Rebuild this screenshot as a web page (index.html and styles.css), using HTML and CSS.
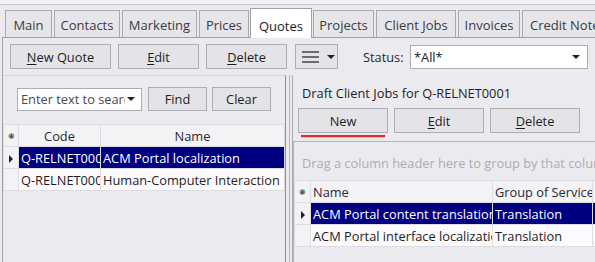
FILE: index.html
```html
<!DOCTYPE html>
<html lang="en">

<head>
    <meta charset="utf-8">
    <title>Quotes</title>
    <link rel="stylesheet" href="styles.css">
</head>

<body>
    <div class="topbar"></div>

    <nav class="tabs">
        <div class="tab t-main">Main</div>
        <div class="tab t-contacts">Contacts</div>
        <div class="tab t-marketing">Marketing</div>
        <div class="tab t-prices">Prices</div>
        <div class="tab t-quotes aktiv">Quotes</div>
        <div class="tab t-projects">Projects</div>
        <div class="tab t-jobs">Client Jobs</div>
        <div class="tab t-invoices">Invoices</div>
        <div class="tab t-credit">Credit Notes</div>
    </nav>

    <section class="page">
        <div class="toolbar">
            <button class="btn btn-quote"><u>N</u>ew Quote</button>
            <button class="btn btn-small"><u>E</u>dit</button>
            <button class="btn btn-small"><u>D</u>elete</button>
            <button class="btn btn-menu">
                <svg width="22" height="12" viewBox="0 0 22 12">
                    <rect x="0" y="0" width="17" height="2" fill="#6b6b70"/>
                    <rect x="0" y="5" width="17" height="2" fill="#6b6b70"/>
                    <rect x="0" y="10" width="17" height="2" fill="#6b6b70"/>
                </svg>
                <span class="caret"></span>
            </button>
            <span class="status-label">Status:</span>
            <div class="combo status-combo">*All*<span class="caret"></span></div>
        </div>

        <div class="split">
            <div class="pane venstre">
                <div class="search">
                    <div class="combo search-combo"><span class="clip">Enter text to search</span><span class="caret"></span></div>
                    <button class="btn btn-find">Find</button>
                    <button class="btn btn-find">Clear</button>
                </div>

                <table class="grid grid-quotes">
                    <colgroup>
                        <col class="c-ind">
                        <col class="c-code">
                        <col>
                    </colgroup>
                    <tr class="head">
                        <td class="ind">&#10059;</td>
                        <td class="center">Code</td>
                        <td class="center">Name</td>
                    </tr>
                    <tr class="valgt">
                        <td class="ind"><span class="pil"></span></td>
                        <td class="fokus">Q-RELNET0001</td>
                        <td>ACM Portal localization</td>
                    </tr>
                    <tr>
                        <td class="ind"></td>
                        <td>Q-RELNET0002</td>
                        <td>Human-Computer Interaction Research</td>
                    </tr>
                </table>
            </div>

            <div class="splitter"></div>

            <div class="pane hoejre">
                <p class="titel">Draft Client Jobs for Q-RELNET0001</p>
                <div class="job-buttons">
                    <button class="btn btn-job new">New</button>
                    <button class="btn btn-job"><u>E</u>dit</button>
                    <button class="btn btn-job"><u>D</u>elete</button>
                </div>

                <div class="jobs-box">
                    <p class="group-hint">Drag a column header here to group by that column</p>
                    <table class="grid grid-jobs">
                        <colgroup>
                            <col class="c-ind2">
                            <col class="c-name">
                            <col class="c-group">
                            <col>
                        </colgroup>
                        <tr class="head">
                            <td class="ind">&#10059;</td>
                            <td>Name</td>
                            <td>Group of Services</td>
                            <td>Status</td>
                        </tr>
                        <tr class="valgt">
                            <td class="ind"><span class="pil"></span></td>
                            <td>ACM Portal content translation</td>
                            <td>Translation</td>
                            <td>Draft</td>
                        </tr>
                        <tr>
                            <td class="ind"></td>
                            <td>ACM Portal interface localization</td>
                            <td>Translation</td>
                            <td class="roed">Draft</td>
                        </tr>
                    </table>
                </div>
            </div>
        </div>
    </section>
</body>

</html>
```

FILE: styles.css
```css
* {
    box-sizing: border-box;
}

body {
    margin: 0;
    width: 595px;
    height: 262px;
    overflow: hidden;
    background-color: #ebebef;
    font-family: 'Open Sans', sans-serif;
    font-size: 12.8px;
    color: #1e1e1e;
}

p {
    margin: 0;
}

.topbar {
    height: 5px;
    background-color: #f2f2f4;
    border-bottom: 1px solid #c6c6cc;
}

/* tabs */

.tabs {
    display: flex;
    gap: 2px;
    padding-left: 5px;
    margin-top: 4px;
    height: 28px;
    align-items: flex-end;
    white-space: nowrap;
}

.tab {
    height: 27px;
    flex-shrink: 0;
    border: 1px solid #a9a9b0;
    border-bottom: none;
    background-color: #e6e6ea;
    color: #3a3a44;
    font-size: 13px;
    line-height: 29px;
    text-align: center;
    overflow: hidden;
}

.tab.aktiv {
    height: 30px;
    margin-bottom: -1px;
    position: relative;
    background-color: #fff;
    color: #1a1a1a;
    line-height: 34px;
    border-color: #a0a0a8;
}

.t-main { width: 47px; }
.t-contacts { width: 66px; }
.t-marketing { width: 75px; }
.t-prices { width: 50px; margin-right: -1px; }
.t-quotes { width: 62px; margin-right: -1px; }
.t-projects { width: 61px; }
.t-jobs { width: 80px; }
.t-invoices { width: 62px; }
.t-credit { width: 80px; text-align: left; padding-left: 7px; }

/* page */

.page {
    margin-left: 2px;
    border-top: 1px solid #a0a0a8;
    border-left: 1px solid #a0a0a8;
    height: 230px;
}

.toolbar {
    display: flex;
    align-items: center;
    height: 25px;
    margin: 6px 0 6px 7px;
}

.btn {
    height: 25px;
    padding: 0;
    border: 1px solid #adadb4;
    background-color: #e3e3e8;
    font-family: 'Open Sans', sans-serif;
    font-size: 12.8px;
    color: #1e1e1e;
    flex-shrink: 0;
}

.btn u {
    text-underline-offset: 2px;
}

.btn-quote {
    width: 101px;
    margin-right: 7px;
}

.btn-small {
    width: 81px;
    margin-right: 7px;
}

.btn-menu {
    width: 43px;
    margin-left: 1px;
    display: flex;
    align-items: center;
    padding-left: 6px;
    gap: 3px;
}

.caret {
    display: inline-block;
    flex-shrink: 0;
    width: 0;
    height: 0;
    border-left: 4px solid transparent;
    border-right: 4px solid transparent;
    border-top: 4px solid #222;
}

.status-label {
    margin-left: 25px;
    width: 47px;
    color: #2a2a2a;
}

.combo {
    display: flex;
    align-items: center;
    justify-content: space-between;
    background-color: #fff;
    border: 1px solid #abadb3;
    padding: 0 7px 0 3px;
    color: #1a1a1a;
}

.status-combo {
    width: 178px;
    height: 24px;
}

/* panes */

.split {
    display: flex;
    height: 187px;
}

.pane.venstre {
    width: 283px;
    border-right: 1px solid #8e8e96;
    border-top: 1px solid #d4d4da;
}

.splitter {
    width: 7px;
    border-right: 1px solid #a9a9b0;
}

.splitter::before {
    content: "";
    display: block;
    margin-left: 3px;
    width: 1px;
    height: 100%;
    background-color: #b4b4ba;
}

.pane.hoejre {
    flex: 1;
    padding-top: 9px;
    overflow: hidden;
}

.search {
    display: flex;
    align-items: center;
    margin: 11px 0 13px 14px;
    gap: 5px;
}

.search-combo {
    width: 125px;
    height: 23px;
    margin-right: 1px;
    color: #4a4a50;
    padding-right: 6px;
}

.clip {
    overflow: hidden;
    white-space: nowrap;
    width: 104px;
}

.btn-find {
    width: 59px;
    height: 24px;
}

/* grids */

.grid {
    border-collapse: collapse;
    table-layout: fixed;
    background-color: #fcfafc;
}

.grid td {
    height: 22px;
    padding: 0 2px;
    border: 1px solid #dcdce2;
    white-space: nowrap;
    overflow: hidden;
    text-overflow: clip;
}

.grid .head td {
    background-color: #f3f3f6;
    color: #2a2a30;
    height: 22px;
}

.grid .center {
    text-align: center;
}

.grid td.ind {
    padding: 0;
    text-align: center;
    font-size: 8px;
    color: #333;
    background-color: #f3f3f6;
}

.grid-quotes {
    width: 282px;
}

.c-ind { width: 15px; }
.c-code { width: 82px; }

.grid .valgt td {
    background-color: #000080;
    color: #fff;
    border-top: 1px dotted #e8e6a8;
    border-bottom: 1px dotted #e8e6a8;
}

.grid .valgt td.ind {
    background-color: #f3f3f6;
    border-top-style: solid;
    border-bottom-style: solid;
    border-color: #dcdce2;
}

.grid .valgt td.fokus {
    border: 1px dotted #e8e6a8;
}

.pil {
    display: inline-block;
    width: 0;
    height: 0;
    border-top: 4px solid transparent;
    border-bottom: 4px solid transparent;
    border-left: 4px solid #222;
    vertical-align: middle;
}

.titel {
    margin-left: 9px;
    height: 19px;
    color: #1e1e1e;
}

.job-buttons {
    display: flex;
    gap: 6px;
    margin: 5px 0 0 5px;
}

.btn-job {
    width: 90px;
    height: 25px;
}

.btn-job.new {
    position: relative;
}

.btn-job.new::after {
    content: "";
    position: absolute;
    left: 2px;
    right: 2px;
    bottom: -5px;
    height: 2px;
    background-color: #e52a2a;
    box-shadow: 0 1px 1px rgba(0, 0, 0, .15);
}

.jobs-box {
    margin-top: 8px;
    border-top: 1px solid #b4b4ba;
    border-left: 1px solid #b4b4ba;
    height: 150px;
}

.group-hint {
    height: 38px;
    line-height: 42px;
    padding-left: 8px;
    color: #acacb2;
    white-space: nowrap;
}

.grid-jobs {
    width: 340px;
}

.c-ind2 { width: 16px; }
.c-name { width: 182px; }
.c-group { width: 100px; }

.roed {
    color: #8a1010;
}
```
